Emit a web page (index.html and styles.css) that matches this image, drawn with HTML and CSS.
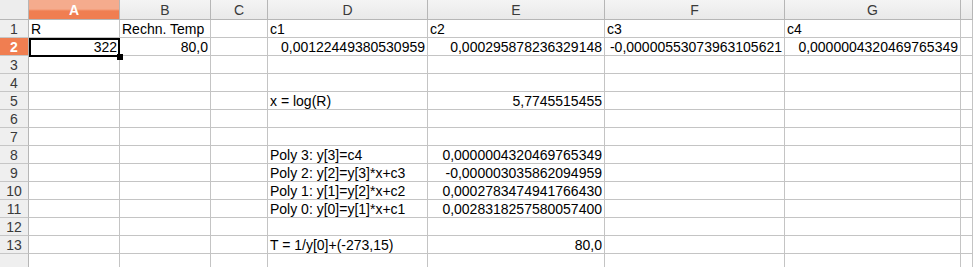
FILE: index.html
```html
<!DOCTYPE html>
<html>
<head>
<meta charset="utf-8">
<link rel="stylesheet" href="styles.css">
</head>
<body>
<div class="sheet">
  <div class="ch corner"></div>
  <div class="ch sel">A</div>
  <div class="ch">B</div>
  <div class="ch">C</div>
  <div class="ch">D</div>
  <div class="ch">E</div>
  <div class="ch">F</div>
  <div class="ch">G</div>
  <div class="ch"></div>

  <div class="rh">1</div>
  <div class="c">R</div>
  <div class="c">Rechn. Temp</div>
  <div class="c"></div>
  <div class="c">c1</div>
  <div class="c">c2</div>
  <div class="c">c3</div>
  <div class="c">c4</div>
  <div class="c"></div>

  <div class="rh rsel">2</div>
  <div class="c r cur">322</div>
  <div class="c r">80,0</div>
  <div class="c"></div>
  <div class="c r">0,00122449380530959</div>
  <div class="c r">0,000295878236329148</div>
  <div class="c r">-0,00000553073963105621</div>
  <div class="c r">0,0000004320469765349</div>
  <div class="c"></div>

  <div class="rh">3</div>
  <div class="c"></div><div class="c"></div><div class="c"></div><div class="c"></div><div class="c"></div><div class="c"></div><div class="c"></div><div class="c"></div>

  <div class="rh">4</div>
  <div class="c"></div><div class="c"></div><div class="c"></div><div class="c"></div><div class="c"></div><div class="c"></div><div class="c"></div><div class="c"></div>

  <div class="rh">5</div>
  <div class="c"></div><div class="c"></div><div class="c"></div>
  <div class="c">x = log(R)</div>
  <div class="c r">5,7745515455</div>
  <div class="c"></div><div class="c"></div><div class="c"></div>

  <div class="rh">6</div>
  <div class="c"></div><div class="c"></div><div class="c"></div><div class="c"></div><div class="c"></div><div class="c"></div><div class="c"></div><div class="c"></div>

  <div class="rh">7</div>
  <div class="c"></div><div class="c"></div><div class="c"></div><div class="c"></div><div class="c"></div><div class="c"></div><div class="c"></div><div class="c"></div>

  <div class="rh">8</div>
  <div class="c"></div><div class="c"></div><div class="c"></div>
  <div class="c">Poly 3: y[3]=c4</div>
  <div class="c r">0,0000004320469765349</div>
  <div class="c"></div><div class="c"></div><div class="c"></div>

  <div class="rh">9</div>
  <div class="c"></div><div class="c"></div><div class="c"></div>
  <div class="c">Poly 2: y[2]=y[3]*x+c3</div>
  <div class="c r">-0,000003035862094959</div>
  <div class="c"></div><div class="c"></div><div class="c"></div>

  <div class="rh">10</div>
  <div class="c"></div><div class="c"></div><div class="c"></div>
  <div class="c">Poly 1: y[1]=y[2]*x+c2</div>
  <div class="c r">0,0002783474941766430</div>
  <div class="c"></div><div class="c"></div><div class="c"></div>

  <div class="rh">11</div>
  <div class="c"></div><div class="c"></div><div class="c"></div>
  <div class="c">Poly 0: y[0]=y[1]*x+c1</div>
  <div class="c r">0,0028318257580057400</div>
  <div class="c"></div><div class="c"></div><div class="c"></div>

  <div class="rh">12</div>
  <div class="c"></div><div class="c"></div><div class="c"></div><div class="c"></div><div class="c"></div><div class="c"></div><div class="c"></div><div class="c"></div>

  <div class="rh">13</div>
  <div class="c"></div><div class="c"></div><div class="c"></div>
  <div class="c">T = 1/y[0]+(-273,15)</div>
  <div class="c r">80,0</div>
  <div class="c"></div><div class="c"></div><div class="c"></div>

  <div class="rh"></div>
  <div class="c"></div><div class="c"></div><div class="c"></div><div class="c"></div><div class="c"></div><div class="c"></div><div class="c"></div><div class="c"></div>
</div>
</body>
</html>
```
FILE: styles.css
```css
html, body {
  margin: 0;
  padding: 0;
  background: #ffffff;
  overflow: hidden;
}

.sheet {
  display: grid;
  grid-template-columns: 29px 91px 91px 57px 160px 177px 180px 176px 12px;
  grid-template-rows: 20px repeat(14, 18px);
  font-family: "Liberation Sans", Arial, sans-serif;
  font-size: 14px;
  color: #000;
  width: 973px;
  height: 267px;
  overflow: hidden;
}

.sheet > div {
  box-sizing: border-box;
  white-space: nowrap;
  overflow: hidden;
}

.ch {
  background: linear-gradient(#f4f4f4, #e9e9e9);
  border-right: 1px solid #b6b6b6;
  border-bottom: 1px solid #b6b6b6;
  color: #3a3a3a;
  display: flex;
  align-items: center;
  justify-content: center;
  line-height: 16px;
  padding-top: 1px;
}

.ch.corner {
  background: #ededed;
}

.ch.sel {
  background: linear-gradient(#f5ab8d 0, #f5ab8d 9px, #f07e51 11px, #f07e51 100%);
  color: #ffffff;
  font-weight: bold;
}

.rh {
  background: #efefef;
  border-right: 1px solid #b6b6b6;
  border-bottom: 1px solid #c6c6c6;
  color: #3a3a3a;
  display: flex;
  align-items: flex-end;
  justify-content: center;
  line-height: 16px;
}

.rh.rsel {
  background: #f07e51;
  color: #ffffff;
  font-weight: bold;
}

.c {
  border-right: 1px solid #c4c4c4;
  border-bottom: 1px solid #c4c4c4;
  display: flex;
  align-items: flex-end;
  justify-content: flex-start;
  padding: 0 2px 0 2px;
  line-height: 16px;
}

.c.r {
  justify-content: flex-end;
  padding-right: 2px;
}

.sheet > .cur {
  position: relative;
  overflow: visible;
  z-index: 2;
}

.cur::before {
  content: "";
  position: absolute;
  left: 0;
  top: 0;
  right: -1px;
  bottom: -2px;
  border: 2px solid #000;
}

.cur::after {
  content: "";
  position: absolute;
  right: -4px;
  bottom: -5px;
  width: 6px;
  height: 6px;
  background: #000;
}
```
